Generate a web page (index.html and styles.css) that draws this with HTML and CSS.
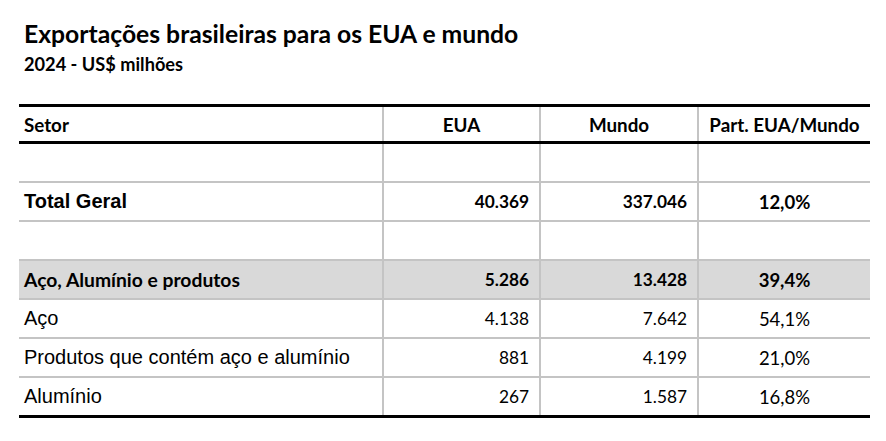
FILE: index.html
```html
<!DOCTYPE html>
<html lang="pt-BR">
<head>
<meta charset="utf-8">
<title>Exportações brasileiras para os EUA e mundo</title>
<link rel="stylesheet" href="styles.css">
</head>
<body>
<div class="page">
  <h1 class="title">Exportações brasileiras para os EUA e mundo</h1>
  <p class="subtitle">2024 - US$ milhões</p>
  <table class="tbl">
    <colgroup>
      <col class="c1"><col class="c2"><col class="c3"><col class="c4">
    </colgroup>
    <thead>
      <tr class="head">
        <th class="left">Setor</th>
        <th>EUA</th>
        <th>Mundo</th>
        <th>Part. EUA/Mundo</th>
      </tr>
    </thead>
    <tbody>
      <tr class="empty"><td></td><td></td><td></td><td></td></tr>
      <tr class="total">
        <td class="label">Total Geral</td>
        <td class="num">40.369</td>
        <td class="num">337.046</td>
        <td class="pct">12,0%</td>
      </tr>
      <tr class="empty"><td></td><td></td><td></td><td></td></tr>
      <tr class="group">
        <td class="label">Aço, Alumínio e produtos</td>
        <td class="num">5.286</td>
        <td class="num">13.428</td>
        <td class="pct">39,4%</td>
      </tr>
      <tr class="item">
        <td class="label">Aço</td>
        <td class="num">4.138</td>
        <td class="num">7.642</td>
        <td class="pct">54,1%</td>
      </tr>
      <tr class="item">
        <td class="label">Produtos que contém aço e alumínio</td>
        <td class="num">881</td>
        <td class="num">4.199</td>
        <td class="pct">21,0%</td>
      </tr>
      <tr class="item last">
        <td class="label">Alumínio</td>
        <td class="num">267</td>
        <td class="num">1.587</td>
        <td class="pct">16,8%</td>
      </tr>
    </tbody>
  </table>
</div>
</body>
</html>
```
FILE: styles.css
```css
html, body {
  margin: 0;
  padding: 0;
  background: #ffffff;
}
.page {
  padding: 19px 0 0 19px;
  font-family: "Lato", "Carlito", "Liberation Sans", sans-serif;
  color: #000000;
}
.title {
  margin: 0 0 0 5px;
  font-size: 24.7px;
  font-weight: 700;
  line-height: 30px;
}
.subtitle {
  margin: 3px 0 0 5px;
  font-size: 18.2px;
  font-weight: 700;
  line-height: 24px;
}
.tbl {
  margin-top: 28px;
  border-collapse: collapse;
  table-layout: fixed;
  width: 851px;
}
.c1 { width: 364px; }
.c2 { width: 157px; }
.c3 { width: 158px; }
.c4 { width: 172px; }
.tbl th, .tbl td {
  padding: 0;
  border-left: 2px solid #c4c4c4;
  border-right: 2px solid #c4c4c4;
  border-bottom: 2px solid #c4c4c4;
}
.tbl tr > :first-child { border-left: none; }
.tbl tr > :last-child { border-right: none; }
.head th {
  height: 34px;
  border-top: 3px solid #000;
  border-bottom: 3px solid #000;
  font-size: 18.8px;
  font-weight: 700;
  text-align: center;
}
.head th.left {
  text-align: left;
  padding-left: 5px;
}
.tbl td { height: 37px; }
.label {
  padding-left: 5px !important;
  font-family: "Liberation Sans", Arial, sans-serif;
  font-size: 20px;
}
.num {
  text-align: right;
  padding-right: 10px !important;
  font-size: 17.3px;
}
.pct {
  text-align: center;
  font-size: 18.5px;
}
.total td { font-weight: 700; }
.group td {
  background: #d9d9d9;
  font-weight: 700;
}
.group .label {
  font-family: "Lato", "Carlito", sans-serif;
  font-size: 19.3px;
}
.last td { border-bottom: 3px solid #000; }
```
